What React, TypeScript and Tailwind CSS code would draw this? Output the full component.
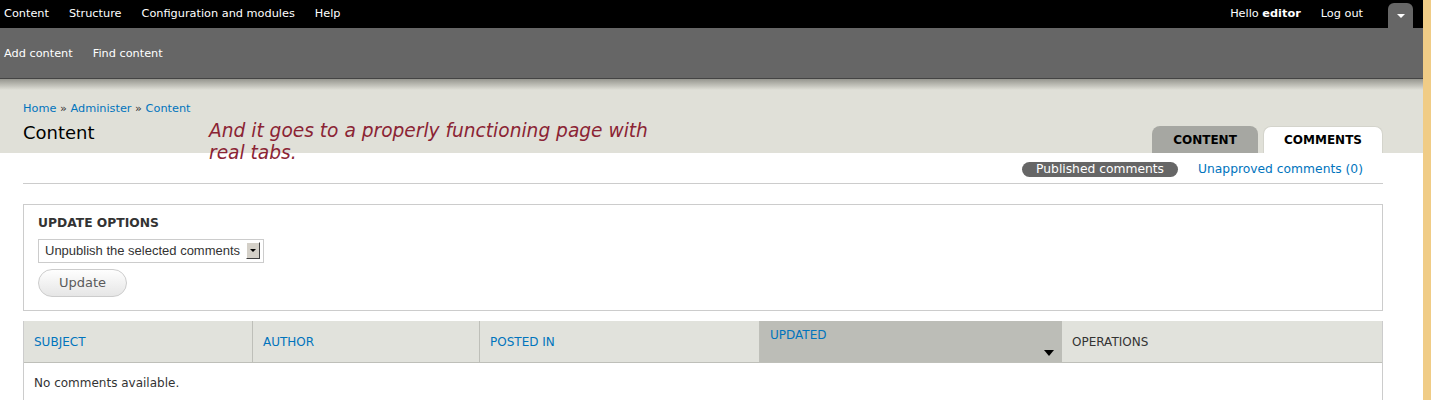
import * as React from 'react';

const font = "font-['DejaVu_Sans',sans-serif]";

const Toolbar: React.FunctionComponent = () => {
    return <div>
        <div className='h-[28px] bg-black flex items-center justify-between text-[11.3px] text-white'>
            <div className='flex items-center gap-[20px] pl-[4px]'>
                <span>Content</span>
                <span>Structure</span>
                <span>Configuration and modules</span>
                <span>Help</span>
            </div>
            <div className='flex items-center h-full'>
                <span>Hello <b>editor</b></span>
                <span className='ml-[20px]'>Log out</span>
                <div className='ml-[25px] mr-[10px] mt-[3px] self-stretch w-[25px] bg-[#666666] rounded-t-[6px] flex items-center justify-center'>
                    <div className='w-0 h-0 border-l-[4px] border-r-[4px] border-t-[4px] border-l-transparent border-r-transparent border-t-white'></div>
                </div>
            </div>
        </div>
        <div className='h-[50px] bg-[#666666] flex items-center gap-[20px] pl-[4px] pt-[3px] text-[11.3px] text-white'>
            <span>Add content</span>
            <span>Find content</span>
        </div>
        <div className='h-[1px] bg-[#444444]'></div>
        <div className='h-[11px] bg-gradient-to-b from-[#96968f] to-[#e0e0d8]'></div>
    </div>;
};

const Header: React.FunctionComponent = () => {
    return <div className='bg-[#e0e0d8] px-[23px] pr-[40px] relative h-[63px]'>
        <div className='pt-[11px] text-[11.3px] text-[#0074bd]'>
            Home <span className='text-[#333]'>»</span> Administer <span className='text-[#333]'>»</span> Content
        </div>
        <div className='flex items-start mt-[4px]'>
            <h1 className='text-[18px] text-black leading-[22px] w-[186px]'>Content</h1>
            <p className='italic text-[18.6px] leading-[22px] text-[#8b2434] w-[470px] -mt-[2px] relative z-10'>
                And it goes to a properly functioning page with real tabs.
            </p>
        </div>
        <div className='absolute right-[40px] bottom-0 flex items-end gap-[5px] text-[12px] font-bold'>
            <div className='w-[106px] h-[27px] bg-[#a6a7a2] rounded-t-[8px] flex items-center justify-center text-black'>CONTENT</div>
            <div className='w-[120px] h-[27px] bg-white rounded-t-[8px] border border-b-0 border-[#d4d4cc] flex items-center justify-center text-black'>COMMENTS</div>
        </div>
    </div>;
};

const columns = [
    { label: 'SUBJECT', w: 'w-[229px]' },
    { label: 'AUTHOR', w: 'w-[227px]' },
    { label: 'POSTED IN', w: 'w-[280px]' },
];

export default function App() {
    return <div className={`${font} flex w-[1431px] min-h-[400px] bg-white`}>
        <div className='w-[1423px]'>
            <Toolbar />
            <Header />
            <div className='px-[23px] pr-[40px]'>
                <div className='flex justify-end items-center gap-[20px] pt-[7px] pr-[20px] text-[12.3px]'>
                    <span className='bg-[#666666] text-white rounded-full px-[14px] h-[15px] leading-[15px]'>Published comments</span>
                    <span className='text-[#0074bd]'>Unapproved comments (0)</span>
                </div>
                <div className='h-[1px] bg-[#cccccc] mt-[5px]'></div>

                <div className='mt-[20px] border border-[#cccccc] h-[107px] px-[14px] pt-[9px]'>
                    <div className='text-[12.3px] font-bold text-[#333] uppercase'>Update options</div>
                    <div className='mt-[6px] w-[226px] h-[24px] border border-[#cccccc] flex items-center pl-[6px] pr-[3px] justify-between font-["Liberation_Sans",sans-serif] text-[13px] text-[#333]'>
                        <span>Unpublish the selected comments</span>
                        <div className='w-[14px] h-[17px] bg-[#d4d0c8] border border-t-white border-l-white border-r-[#404040] border-b-[#404040] flex items-center justify-center'>
                            <div className='w-0 h-0 border-l-[3px] border-r-[3px] border-t-[3px] border-l-transparent border-r-transparent border-t-black'></div>
                        </div>
                    </div>
                    <button className='mt-[6px] w-[89px] h-[28px] rounded-full border border-[#cccccc] bg-gradient-to-b from-[#fefefe] to-[#e6e6e6] text-[13px] text-[#5a5a5a]'>Update</button>
                </div>

                <div className='mt-[10px] border border-[#cccccc] border-t-0'>
                    <div className='flex h-[42px] bg-[#e1e2dc] border-b border-[#bebfb9] text-[12px]'>
                        {columns.map((c) => <div key={c.label} className={`${c.w} border-r border-[#bebfb9] flex items-center pl-[10px] text-[#0074bd]`}>{c.label}</div>)}
                        <div className='w-[302px] bg-[#bcbdb7] relative pl-[10px] pt-[5px] text-[#0074bd]'>
                            UPDATED
                            <div className='absolute right-[8px] bottom-[6px] w-0 h-0 border-l-[5px] border-r-[5px] border-t-[6px] border-l-transparent border-r-transparent border-t-black'></div>
                        </div>
                        <div className='flex-1 flex items-center pl-[10px] text-[#333]'>OPERATIONS</div>
                    </div>
                    <div className='h-[40px] flex items-center pl-[10px] text-[12px] text-[#333]'>No comments available.</div>
                </div>
            </div>
        </div>
        <div className='flex-1 bg-[#f0cc86]'></div>
    </div>;
}
